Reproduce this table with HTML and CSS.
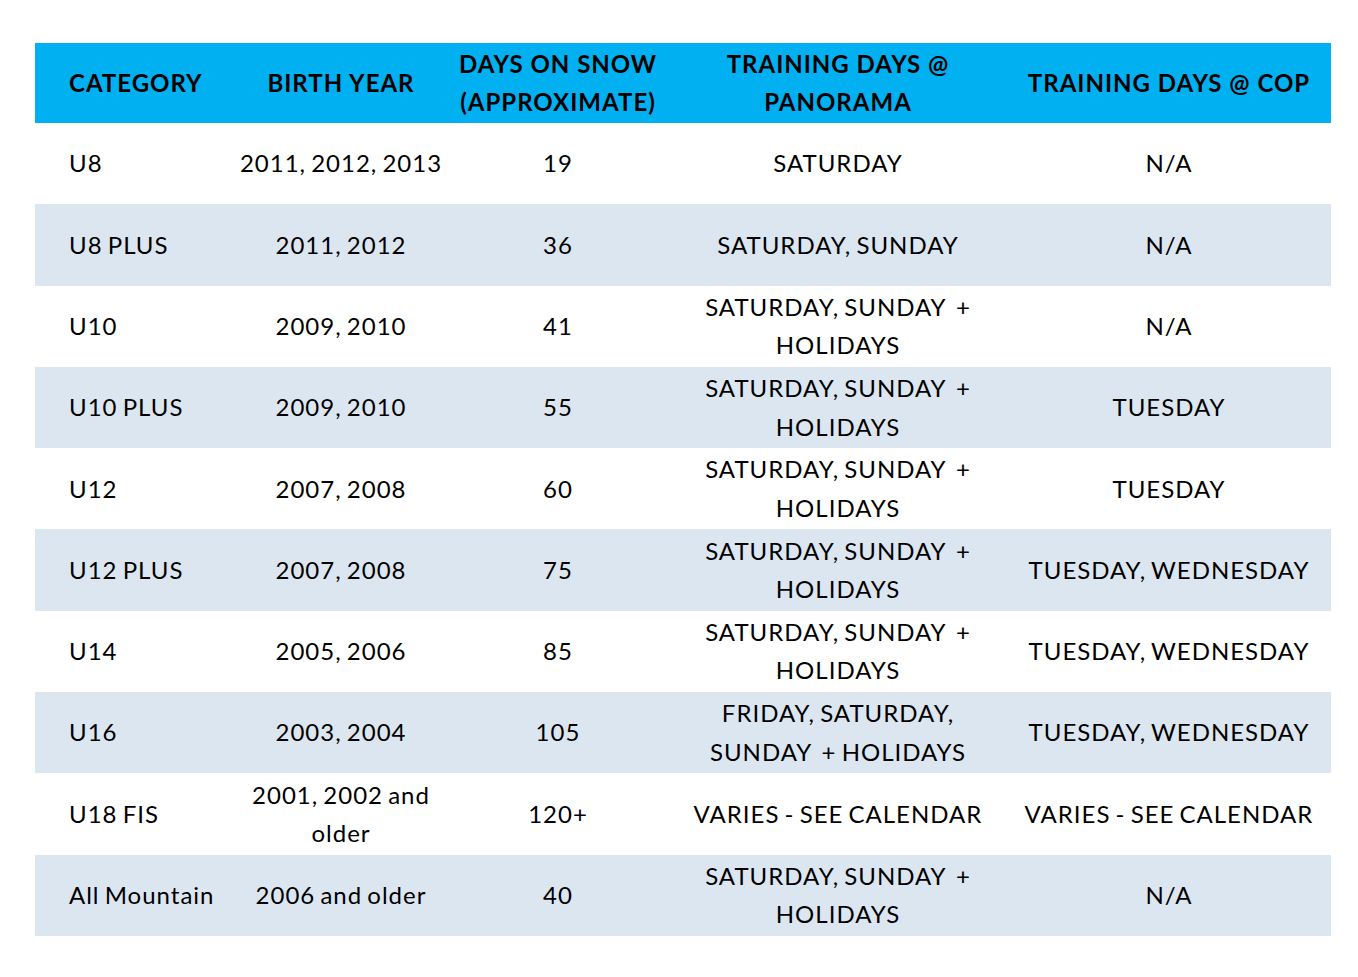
FILE: index.html
```html
<!DOCTYPE html>
<html>
<head>
<meta charset="utf-8">
<link rel="stylesheet" href="styles.css">
</head>
<body>
<div class="page">
<table class="schedule">
  <colgroup>
    <col class="c1"><col class="c2"><col class="c3"><col class="c4"><col class="c5">
  </colgroup>
  <thead>
    <tr>
      <th class="left">CATEGORY</th>
      <th>BIRTH YEAR</th>
      <th>DAYS ON SNOW<br>(APPROXIMATE)</th>
      <th>TRAINING DAYS @<br>PANORAMA</th>
      <th>TRAINING DAYS @ COP</th>
    </tr>
  </thead>
  <tbody>
    <tr><td class="left">U8</td><td>2011, 2012, 2013</td><td>19</td><td>SATURDAY</td><td>N/A</td></tr>
    <tr class="alt"><td class="left">U8 PLUS</td><td>2011, 2012</td><td>36</td><td>SATURDAY, SUNDAY</td><td>N/A</td></tr>
    <tr><td class="left">U10</td><td>2009, 2010</td><td>41</td><td>SATURDAY, SUNDAY &nbsp;+<br>HOLIDAYS</td><td>N/A</td></tr>
    <tr class="alt"><td class="left">U10 PLUS</td><td>2009, 2010</td><td>55</td><td>SATURDAY, SUNDAY &nbsp;+<br>HOLIDAYS</td><td>TUESDAY</td></tr>
    <tr><td class="left">U12</td><td>2007, 2008</td><td>60</td><td>SATURDAY, SUNDAY &nbsp;+<br>HOLIDAYS</td><td>TUESDAY</td></tr>
    <tr class="alt"><td class="left">U12 PLUS</td><td>2007, 2008</td><td>75</td><td>SATURDAY, SUNDAY &nbsp;+<br>HOLIDAYS</td><td>TUESDAY, WEDNESDAY</td></tr>
    <tr><td class="left">U14</td><td>2005, 2006</td><td>85</td><td>SATURDAY, SUNDAY &nbsp;+<br>HOLIDAYS</td><td>TUESDAY, WEDNESDAY</td></tr>
    <tr class="alt"><td class="left">U16</td><td>2003, 2004</td><td>105</td><td>FRIDAY, SATURDAY,<br>SUNDAY &nbsp;+ HOLIDAYS</td><td>TUESDAY, WEDNESDAY</td></tr>
    <tr><td class="left">U18 FIS</td><td>2001, 2002 and<br>older</td><td>120+</td><td>VARIES - SEE CALENDAR</td><td>VARIES - SEE CALENDAR</td></tr>
    <tr class="alt"><td class="left">All Mountain</td><td>2006 and older</td><td>40</td><td>SATURDAY, SUNDAY &nbsp;+<br>HOLIDAYS</td><td>N/A</td></tr>
  </tbody>
</table>
</div>
</body>
</html>
```

FILE: styles.css
```css
html, body {
  margin: 0;
  padding: 0;
  background: #ffffff;
}

.page {
  padding: 43px 27px 0 35px;
}

.schedule {
  width: 1296px;
  border-collapse: collapse;
  table-layout: fixed;
  font-family: "Lato", "Open Sans", sans-serif;
  font-size: 24px;
  letter-spacing: 1px;
  line-height: 38.5px;
  color: #000000;
}

.c1 { width: 200px; }
.c2 { width: 212px; }
.c3 { width: 222px; }
.c4 { width: 338px; }
.c5 { width: 324px; }

.schedule th {
  background: #00b0f0;
  height: 80px;
  padding: 0;
  font-weight: 700;
  text-align: center;
  vertical-align: middle;
}

.schedule td {
  height: 81.3px;
  padding: 0;
  text-align: center;
  vertical-align: middle;
  font-weight: 400;
  word-spacing: -2px;
}

.schedule .left {
  text-align: left;
  padding-left: 34px;
}

.schedule tr.alt td {
  background: #dce6f1;
}
```
